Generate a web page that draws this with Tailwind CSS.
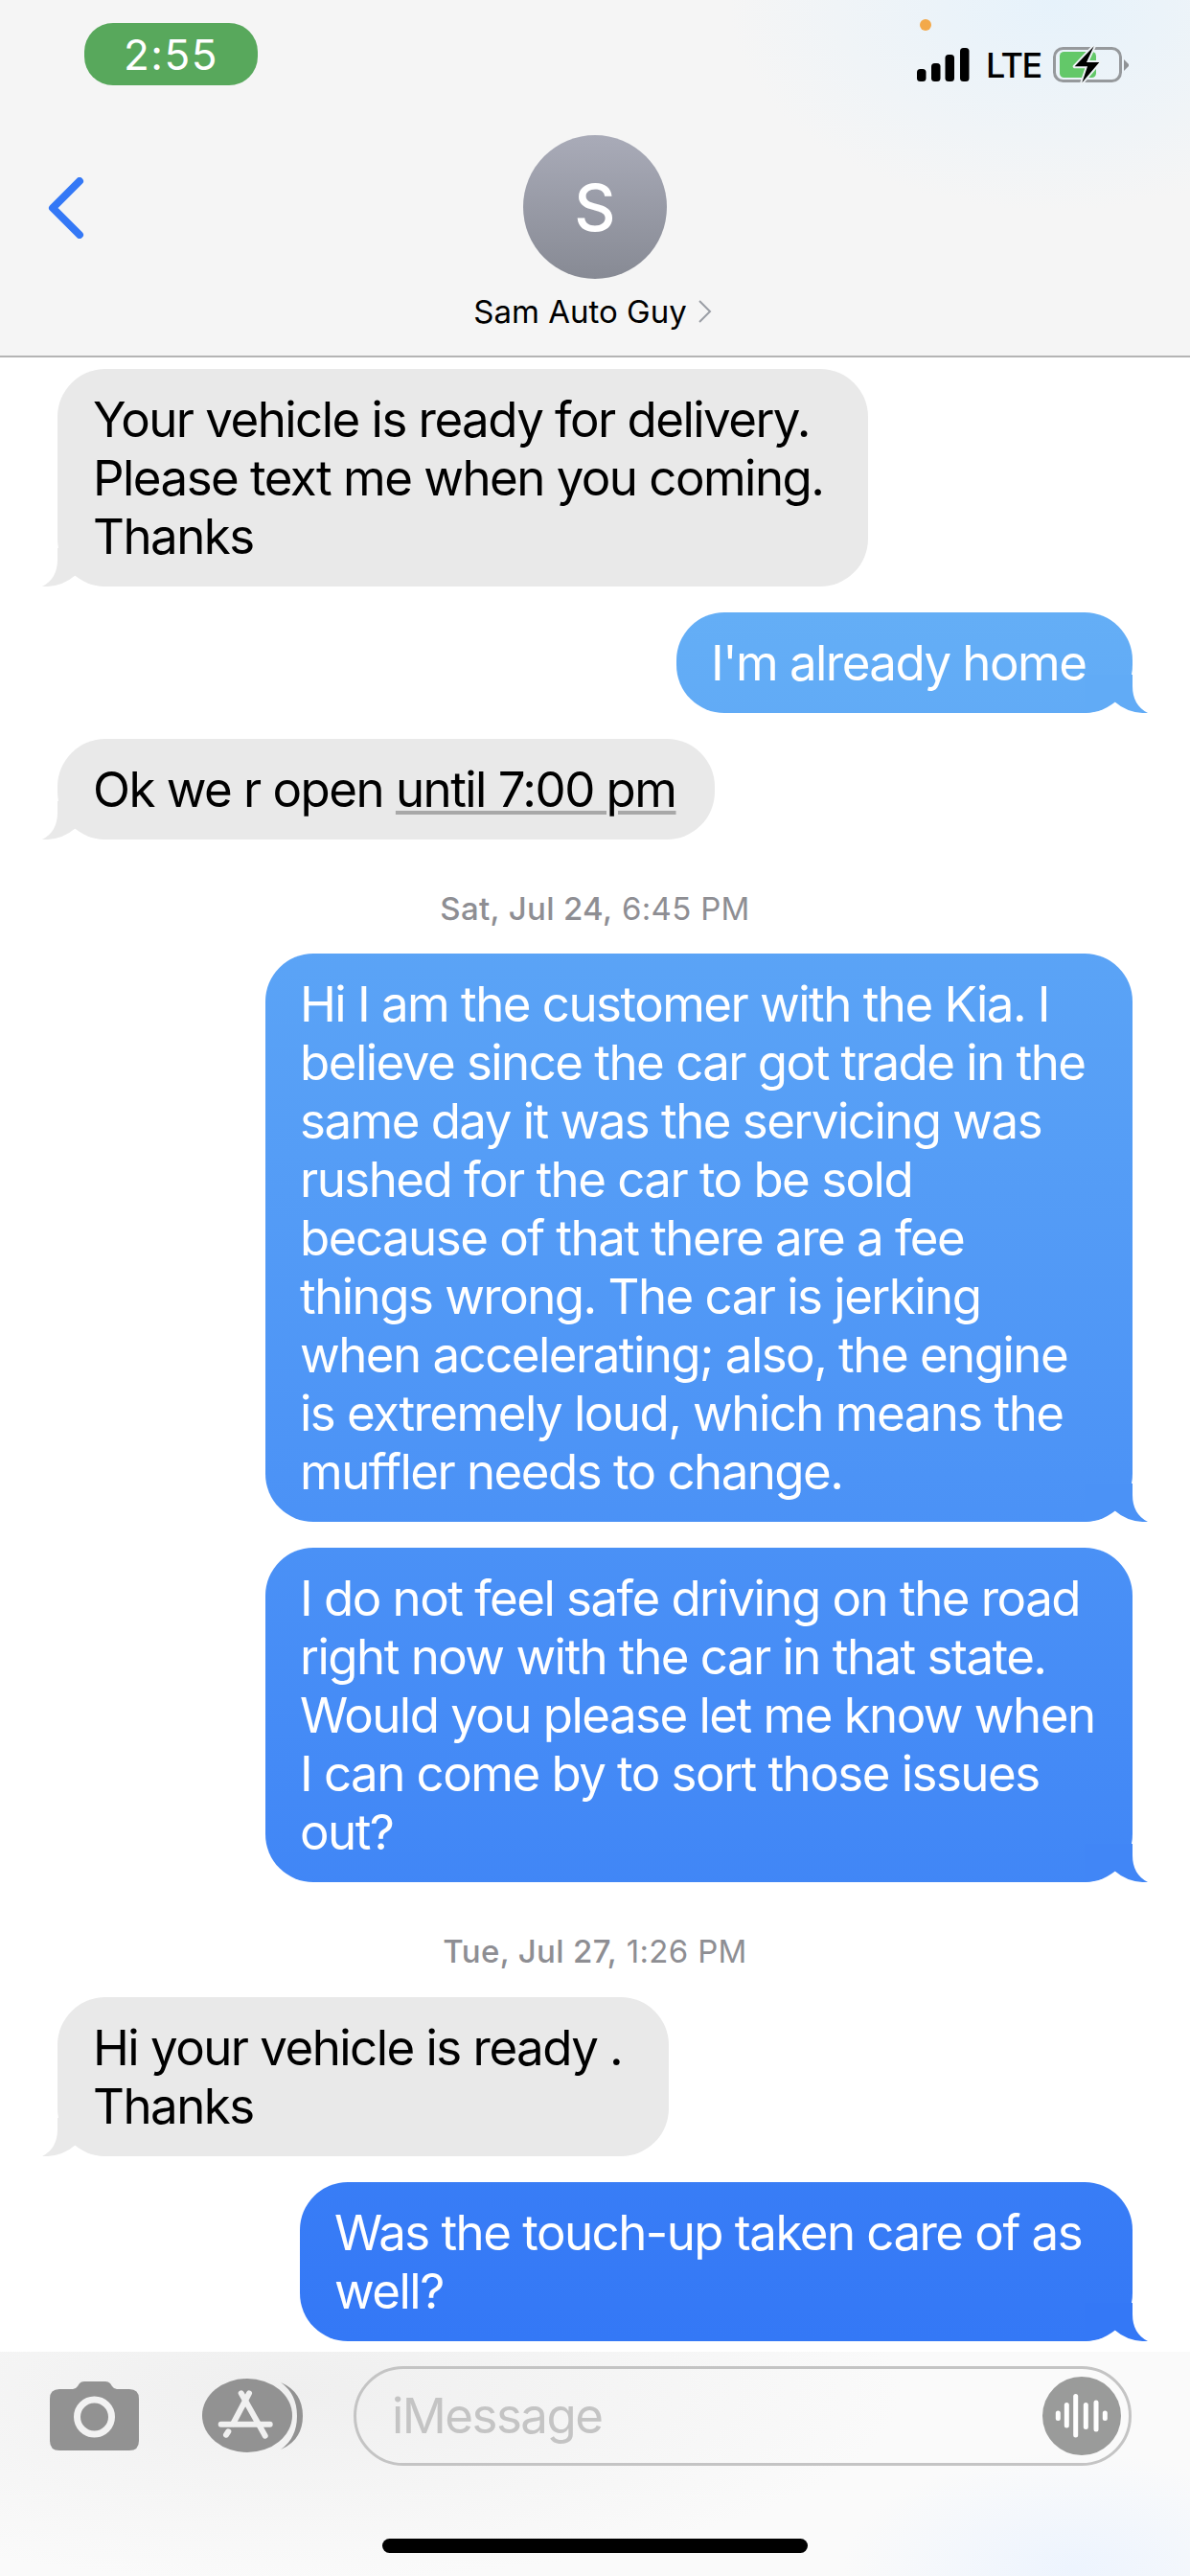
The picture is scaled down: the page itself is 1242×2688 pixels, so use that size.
<!DOCTYPE html>
<html lang="en">
<head>
  <meta charset="UTF-8" />
  <title>Sam Auto Guy</title>
  <script src="https://cdn.jsdelivr.net/npm/@tailwindcss/browser@4"></script>
</head>
<body class="bg-white font-[Inter,'Liberation_Sans',sans-serif]">
<div class="relative w-[1242px] h-[2688px] overflow-hidden flex flex-col bg-white">

  <!-- Header -->
  <header class="h-[373px] shrink-0 border-b-[2px] border-[#b4b4b4] bg-[#f5f5f5] bg-[radial-gradient(ellipse_340px_220px_at_1100px_0px,#e6f2fb,#f5f5f5)]">
    <div class="relative flex justify-between pl-[88px] pr-[63px] pt-[24px]">
      <div class="w-[181px] h-[65px] rounded-[30px] bg-[#58a85c] text-white text-[44px] flex items-center justify-center tracking-[1.5px]">2:55</div>
      <div class="flex items-center h-[37px] mt-[25px]">
        <svg width="57" height="36" viewBox="0 0 57 36" fill="#000">
          <rect x="0" y="22" width="9.5" height="13" rx="3.5"/>
          <rect x="15" y="16" width="9.5" height="19" rx="3.5"/>
          <rect x="29.5" y="7" width="9.5" height="28" rx="3.5"/>
          <rect x="45" y="0" width="9.5" height="35" rx="3.5"/>
        </svg>
        <span class="ml-[15px] w-[55px] text-[36px] leading-none font-medium tracking-[-1.5px] text-black">LTE</span>
        <svg class="ml-[15px]" width="80" height="40" viewBox="0 0 80 40">
          <rect x="1.5" y="2.5" width="69" height="34" rx="9" fill="none" stroke="#96999c" stroke-width="3"/>
          <rect x="7" y="6" width="38" height="27" rx="4.5" fill="#63c869"/>
          <path d="M74 14 L79 19 V21 L74 26Z" fill="#8f9295"/>
          <path d="M42.7 .3 L22.7 21.3 H36 L30.3 38.3 L48.3 17 H35Z" fill="#000" stroke="#eef3f6" stroke-width="4" paint-order="stroke" stroke-linejoin="round"/>
        </svg>
      </div>
      <span class="absolute left-[960px] top-[20px] w-[12px] h-[12px] rounded-full bg-[#f3a94a]"></span>
    </div>

    <div class="grid grid-cols-[1fr_auto_1fr] mt-[52px]">
      <div class="pl-[50px] pt-[44px]">
        <svg width="38" height="64" viewBox="0 0 38 64" fill="none" stroke="#3478f6" stroke-width="8" stroke-linecap="round" stroke-linejoin="round"><path d="M33 4 L5 32 L33 60"/></svg>
      </div>
      <div class="flex flex-col items-center">
        <div class="w-[150px] h-[150px] rounded-full bg-linear-to-b from-[#a9abb8] to-[#878a94] flex items-center justify-center text-white text-[67px] font-medium leading-none">S</div>
        <div class="flex items-center gap-[11px] mt-[14px] -ml-[5px] text-[33px] leading-[40px] text-black">
          Sam Auto Guy
          <svg width="15" height="26" viewBox="0 0 15 26" fill="none" stroke="#9a9ea5" stroke-width="2"><path d="M2 2 L13 13 L2 24"/></svg>
        </div>
      </div>
      <div></div>
    </div>
  </header>

  <!-- Messages -->
  <main class="flex-1 flex flex-col gap-[27px] px-[60px] pt-[12px] text-[51px] leading-[61px] tracking-[-0.03em]">

    <div class="relative w-[846px] rounded-[50px] bg-[#e9e9e9] text-black pl-[37px] py-[22px]">
      <svg class="absolute -left-[16px] bottom-0" width="70" height="40" viewBox="0 0 70 40" fill="#e9e9e9"><path d="M16 0 V12 Q16 32 0 40 Q20 41 35 28 Q48 39 66 40 V0Z"/></svg>
      <p class="relative">Your vehicle is ready for delivery.<br>Please text me when you coming.<br>Thanks</p>
    </div>

    <div class="relative self-end w-[476px] rounded-[50px] bg-fixed bg-[linear-gradient(180deg,#64aef6_640px,#3478f6_2440px)] text-white pl-[36px] py-[22px]">
      <svg class="absolute -right-[16px] bottom-0 -scale-x-100" width="70" height="40" viewBox="0 0 70 40" fill="#61abf6"><path d="M16 0 V12 Q16 32 0 40 Q20 41 35 28 Q48 39 66 40 V0Z"/></svg>
      <p class="relative">I'm already home</p>
    </div>

    <div class="relative w-[686px] rounded-[50px] bg-[#e9e9e9] text-black pl-[37px] py-[22px]">
      <svg class="absolute -left-[16px] bottom-0" width="70" height="40" viewBox="0 0 70 40" fill="#e9e9e9"><path d="M16 0 V12 Q16 32 0 40 Q20 41 35 28 Q48 39 66 40 V0Z"/></svg>
      <p class="relative">Ok we r open <span class="underline decoration-[#a8a8a8] decoration-[4px] underline-offset-[4px]">until 7:00 pm</span></p>
    </div>

    <div class="h-[65px] flex items-center justify-center text-[33px] leading-none tracking-[0.01em] text-[#8e8e93] pt-[25px]"><span><span class="font-medium">Sat, Jul 24,</span> 6:45 PM</span></div>

    <div class="relative self-end w-[905px] rounded-[50px] bg-fixed bg-[linear-gradient(180deg,#64aef6_640px,#3478f6_2440px)] text-white pl-[36px] py-[22px]">
      <svg class="absolute -right-[16px] bottom-0 -scale-x-100" width="70" height="40" viewBox="0 0 70 40" fill="#4b92f6"><path d="M16 0 V12 Q16 32 0 40 Q20 41 35 28 Q48 39 66 40 V0Z"/></svg>
      <p class="relative">Hi I am the customer with the Kia. I<br>believe since the car got trade in the<br>same day it was the servicing was<br>rushed for the car to be sold<br>because of that there are a fee<br>things wrong. The car is jerking<br>when accelerating; also, the engine<br>is extremely loud, which means the<br>muffler needs to change.</p>
    </div>

    <div class="relative self-end w-[905px] rounded-[50px] bg-fixed bg-[linear-gradient(180deg,#64aef6_640px,#3478f6_2440px)] text-white pl-[36px] py-[22px]">
      <svg class="absolute -right-[16px] bottom-0 -scale-x-100" width="70" height="40" viewBox="0 0 70 40" fill="#4186f6"><path d="M16 0 V12 Q16 32 0 40 Q20 41 35 28 Q48 39 66 40 V0Z"/></svg>
      <p class="relative">I do not feel safe driving on the road<br>right now with the car in that state.<br>Would you please let me know when<br>I can come by to sort those issues<br>out?</p>
    </div>

    <div class="h-[66px] flex items-center justify-center text-[33px] leading-none tracking-[0.01em] text-[#8e8e93] pt-[25px]"><span><span class="font-medium">Tue, Jul 27,</span> 1:26 PM</span></div>

    <div class="relative w-[638px] rounded-[50px] bg-[#e9e9e9] text-black pl-[37px] py-[22px]">
      <svg class="absolute -left-[16px] bottom-0" width="70" height="40" viewBox="0 0 70 40" fill="#e9e9e9"><path d="M16 0 V12 Q16 32 0 40 Q20 41 35 28 Q48 39 66 40 V0Z"/></svg>
      <p class="relative">Hi your vehicle is ready .<br>Thanks</p>
    </div>

    <div class="relative self-end w-[869px] rounded-[50px] bg-fixed bg-[linear-gradient(180deg,#64aef6_640px,#3478f6_2440px)] text-white pl-[36px] py-[22px]">
      <svg class="absolute -right-[16px] bottom-0 -scale-x-100" width="70" height="40" viewBox="0 0 70 40" fill="#3478f6"><path d="M16 0 V12 Q16 32 0 40 Q20 41 35 28 Q48 39 66 40 V0Z"/></svg>
      <p class="relative">Was the touch-up taken care of as<br>well?</p>
    </div>
  </main>

  <!-- Composer -->
  <footer class="h-[234px] shrink-0 relative bg-[#fbfbfb] bg-[radial-gradient(ellipse_240px_120px_at_1120px_225px,#edf4fe,transparent),radial-gradient(ellipse_640px_200px_at_300px_40px,#efefef,#fafafa)]">
    <div class="flex items-center pt-[15px] pl-[52px]">
      <svg width="93" height="72" viewBox="0 0 93 72">
        <path d="M10 8 H24 Q27 8 29 5 L31 2 Q32.5 0 36 0 H58 Q61 0 63 2 L65 5 Q67 8 70 8 H83 Q93 8 93 18 V62 Q93 72 83 72 H10 Q0 72 0 62 V18 Q0 8 10 8Z" fill="#929292"/>
        <circle cx="46.5" cy="37" r="18" fill="none" stroke="#f2f2f2" stroke-width="7"/>
      </svg>
      <svg class="ml-[66px]" width="110" height="78" viewBox="0 0 110 78">
        <ellipse cx="47" cy="38.5" rx="47" ry="38.5" fill="#929292"/>
        <path d="M82 4 Q105 14 105 39 Q105 64 82 74 Q99 62 99 39 Q99 16 82 4Z" fill="#929292"/>
        <g stroke="#f0f0f0" stroke-width="6" stroke-linecap="round" fill="none">
          <path d="M40.7 15.3 L65.7 59.7"/>
          <path d="M49 15.3 L32.3 47"/>
          <path d="M19.7 47.7 H70.7"/>
          <path d="M25 58.7 L27.3 55.3"/>
        </g>
      </svg>
      <div class="ml-[48px] w-[812px] h-[104px] rounded-full border-[3px] border-[#c4c4c4] flex items-center justify-between pl-[37px] pr-[8px] text-[51px] tracking-[-0.03em] text-[#c4c4c4]">
        iMessage
        <svg width="82" height="82" viewBox="0 0 82 82">
          <circle cx="41" cy="41" r="41" fill="#9a9b9a"/>
          <g stroke="#fff" stroke-width="5" stroke-linecap="round">
            <path d="M16.3 38 V43.5"/>
            <path d="M25.3 29.5 V51"/>
            <path d="M34.7 20.5 V61"/>
            <path d="M45.3 29.5 V52.5"/>
            <path d="M56 27 V55"/>
            <path d="M65.3 38 V43.5"/>
          </g>
        </svg>
      </div>
    </div>
    <div class="w-[444px] h-[15px] rounded-full bg-black mx-auto mt-[76px]"></div>
  </footer>
</div>
</body>
</html>
